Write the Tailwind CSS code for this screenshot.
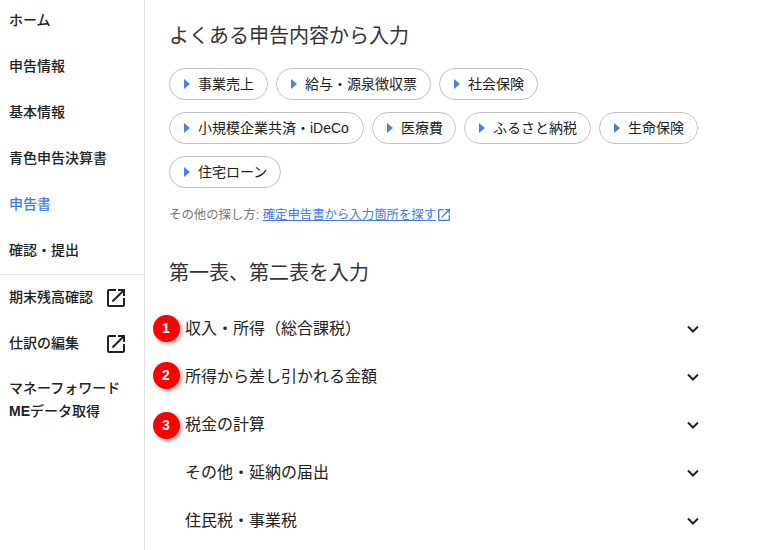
<!DOCTYPE html>
<html lang="ja">
<head>
  <meta charset="UTF-8" />
  <title>申告書</title>
  <script src="https://cdn.jsdelivr.net/npm/@tailwindcss/browser@4"></script>
</head>
<body class="bg-white overflow-hidden font-['Liberation_Sans','Noto_Sans_CJK_JP',sans-serif] text-[#212121]">
  <div class="flex h-[550px] w-[768px]">

    <!-- Sidebar -->
    <nav class="w-[145px] shrink-0 border-r border-[#e0e0e0] text-sm font-medium">
      <div class="h-[274.5px] border-b border-[#e0e0e0] pl-[9px]">
        <a class="flex h-[40px] items-center">ホーム</a>
        <a class="mt-[6px] flex h-[40px] items-center">申告情報</a>
        <a class="mt-[6px] flex h-[40px] items-center">基本情報</a>
        <a class="mt-[6px] flex h-[40px] items-center">青色申告決算書</a>
        <a class="mt-[6px] flex h-[40px] items-center text-[#4479e8]">申告書</a>
        <a class="mt-[6px] flex h-[40px] items-center">確認・提出</a>
      </div>
      <div class="pl-[9px] pt-[2px]">
        <a class="flex h-[40px] items-center justify-between pr-[16px]">期末残高確認
          <svg class="mt-[2px] w-[24px] h-[24px]" viewBox="0 0 24 24" fill="#212121"><path d="M19 19H5V5h7V3H5a2 2 0 0 0-2 2v14a2 2 0 0 0 2 2h14c1.1 0 2-.9 2-2v-7h-2v7zM14 3v2h3.59l-9.83 9.83 1.41 1.41L19 6.41V10h2V3h-7z"/></svg>
        </a>
        <a class="mt-[6px] flex h-[40px] items-center justify-between pr-[16px]">仕訳の編集
          <svg class="mt-[2px] w-[24px] h-[24px]" viewBox="0 0 24 24" fill="#212121"><path d="M19 19H5V5h7V3H5a2 2 0 0 0-2 2v14a2 2 0 0 0 2 2h14c1.1 0 2-.9 2-2v-7h-2v7zM14 3v2h3.59l-9.83 9.83 1.41 1.41L19 6.41V10h2V3h-7z"/></svg>
        </a>
        <a class="mt-[14px] block leading-[23px]">マネーフォワード<br><span class="font-bold">ME</span>データ取得</a>
      </div>
    </nav>

    <!-- Main -->
    <main class="flex-1 pl-[24px] pr-[50px] pt-[21px]">
      <h2 class="text-xl leading-[30px] text-[#333333]">よくある申告内容から入力</h2>

      <div class="mt-[17px] flex flex-wrap gap-x-[8px] gap-y-[12px] w-[560px] text-sm">
        <a class="flex h-[32px] items-center rounded-full border border-[#c4c4c4] pl-[13.5px] pr-[13px]"><span class="mr-[8.5px] h-0 w-0 border-y-[5px] border-l-[6px] border-y-transparent border-l-[#4680f0]"></span>事業売上</a>
        <a class="flex h-[32px] items-center rounded-full border border-[#c4c4c4] pl-[13.5px] pr-[13px]"><span class="mr-[8.5px] h-0 w-0 border-y-[5px] border-l-[6px] border-y-transparent border-l-[#4680f0]"></span>給与・源泉徴収票</a>
        <a class="flex h-[32px] items-center rounded-full border border-[#c4c4c4] pl-[13.5px] pr-[13px]"><span class="mr-[8.5px] h-0 w-0 border-y-[5px] border-l-[6px] border-y-transparent border-l-[#4680f0]"></span>社会保険</a>
        <a class="flex h-[32px] w-[195px] items-center rounded-full border border-[#c4c4c4] pl-[13.5px]"><span class="mr-[8.5px] h-0 w-0 border-y-[5px] border-l-[6px] border-y-transparent border-l-[#4680f0]"></span>小規模企業共済・iDeCo</a>
        <a class="flex h-[32px] w-[84px] items-center rounded-full border border-[#c4c4c4] pl-[13.5px]"><span class="mr-[8.5px] h-0 w-0 border-y-[5px] border-l-[6px] border-y-transparent border-l-[#4680f0]"></span>医療費</a>
        <a class="flex h-[32px] items-center rounded-full border border-[#c4c4c4] pl-[13.5px] pr-[13px]"><span class="mr-[8.5px] h-0 w-0 border-y-[5px] border-l-[6px] border-y-transparent border-l-[#4680f0]"></span>ふるさと納税</a>
        <a class="flex h-[32px] items-center rounded-full border border-[#c4c4c4] pl-[13.5px] pr-[13px]"><span class="mr-[8.5px] h-0 w-0 border-y-[5px] border-l-[6px] border-y-transparent border-l-[#4680f0]"></span>生命保険</a>
        <a class="flex h-[32px] items-center rounded-full border border-[#c4c4c4] pl-[13.5px] pr-[13px]"><span class="mr-[8.5px] h-0 w-0 border-y-[5px] border-l-[6px] border-y-transparent border-l-[#4680f0]"></span>住宅ローン</a>
      </div>

      <p class="mt-[18px] flex items-center text-[12.4px] leading-[18px] text-[#757575]">
        その他の探し方:&nbsp;<a class="text-[#4479e8] underline">確定申告書から入力箇所を探す</a>
        <svg class="w-[16px] h-[16px]" viewBox="0 0 24 24" fill="#4479e8"><path d="M19 19H5V5h7V3H5a2 2 0 0 0-2 2v14a2 2 0 0 0 2 2h14c1.1 0 2-.9 2-2v-7h-2v7zM14 3v2h3.59l-9.83 9.83 1.41 1.41L19 6.41V10h2V3h-7z"/></svg>
      </p>

      <h2 class="mt-[34px] text-xl leading-[30px] text-[#333333]">第一表、第二表を入力</h2>

      <div class="mt-[17px] text-base w-[549px]">
        <div class="relative flex h-[48px] items-center justify-between pl-[16px] pr-[18px]">
          <span class="absolute left-[-16.5px] top-[10px] flex h-[27px] w-[27px] items-center justify-center rounded-full bg-[#ff0000] text-[14px] font-bold text-white shadow-[2px_2px_4px_rgba(0,0,0,0.35)]">1</span>
          <span>収入・所得&#xFF08;総合課税&#xFF09;</span>
          <svg class="w-[14px] h-[14px]" viewBox="0 0 14 14" fill="none" stroke="#212121" stroke-width="2"><path d="M2 4.5l5 5 5-5"/></svg>
        </div>
        <div class="relative flex h-[48px] items-center justify-between pl-[16px] pr-[18px]">
          <span class="absolute left-[-16.5px] top-[9px] flex h-[27px] w-[27px] items-center justify-center rounded-full bg-[#ff0000] text-[14px] font-bold text-white shadow-[2px_2px_4px_rgba(0,0,0,0.35)]">2</span>
          所得から差し引かれる金額
          <svg class="w-[14px] h-[14px]" viewBox="0 0 14 14" fill="none" stroke="#212121" stroke-width="2"><path d="M2 4.5l5 5 5-5"/></svg>
        </div>
        <div class="relative flex h-[48px] items-center justify-between pl-[16px] pr-[18px]">
          <span class="absolute left-[-16.5px] top-[11px] flex h-[27px] w-[27px] items-center justify-center rounded-full bg-[#ff0000] text-[14px] font-bold text-white shadow-[2px_2px_4px_rgba(0,0,0,0.35)]">3</span>
          税金の計算
          <svg class="w-[14px] h-[14px]" viewBox="0 0 14 14" fill="none" stroke="#212121" stroke-width="2"><path d="M2 4.5l5 5 5-5"/></svg>
        </div>
        <div class="flex h-[48px] items-center justify-between pl-[16px] pr-[18px]">
          その他・延納の届出
          <svg class="w-[14px] h-[14px]" viewBox="0 0 14 14" fill="none" stroke="#212121" stroke-width="2"><path d="M2 4.5l5 5 5-5"/></svg>
        </div>
        <div class="flex h-[48px] items-center justify-between pl-[16px] pr-[18px]">
          住民税・事業税
          <svg class="w-[14px] h-[14px]" viewBox="0 0 14 14" fill="none" stroke="#212121" stroke-width="2"><path d="M2 4.5l5 5 5-5"/></svg>
        </div>
      </div>
    </main>
  </div>
</body>
</html>
